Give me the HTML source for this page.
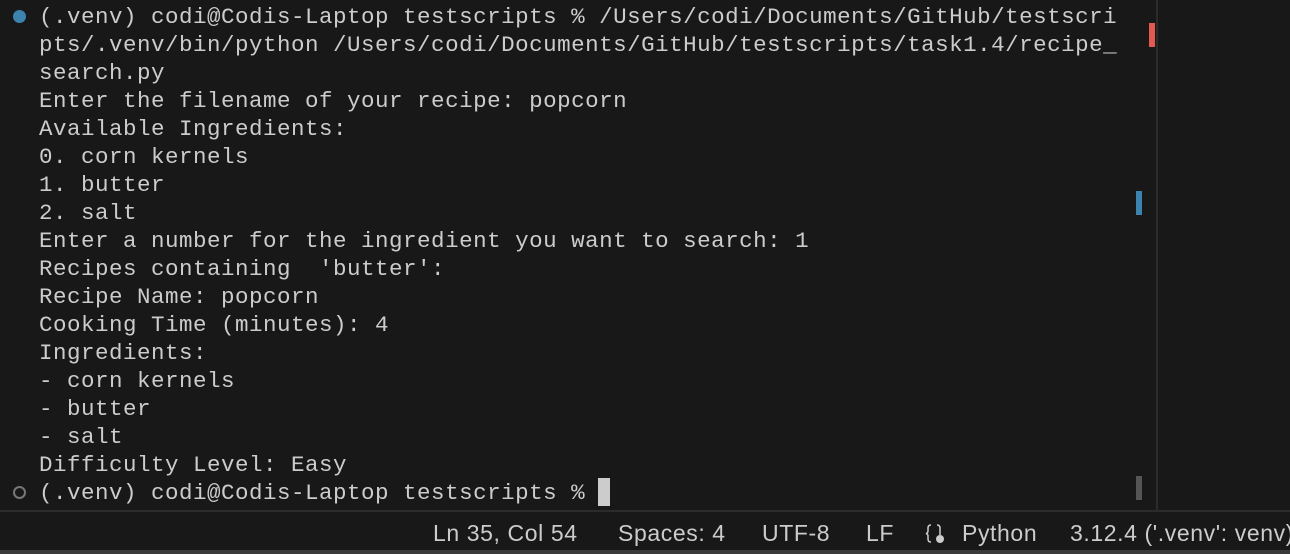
<!DOCTYPE html>
<html><head><style>
html,body{margin:0;padding:0;background:#181818;}
body{width:1290px;height:554px;position:relative;overflow:hidden;}
.term{position:absolute;left:39px;top:3px;font-family:"Liberation Mono",monospace;font-size:22.5px;letter-spacing:0.5px;line-height:28px;color:#cccccc;white-space:pre;}
.dot{position:absolute;left:13px;width:13px;height:13px;border-radius:50%;}
.vline{position:absolute;left:1156px;top:0;width:2px;height:510px;background:#2b2b2b;}
.status{position:absolute;left:0;top:510px;width:1290px;height:40px;border-top:2px solid #2b2b2b;background:#181818;font-family:"Liberation Sans",sans-serif;font-size:23px;letter-spacing:0.6px;color:#cccccc;}
.status span{position:absolute;top:8px;white-space:nowrap;}
.bottom{position:absolute;left:0;top:550px;width:1290px;height:4px;background:#3a3a3a;}
</style></head><body>
<div class="dot" style="top:10px;background:#3c84ad;"></div>
<div class="dot" style="top:486px;border:2px solid #777;width:9px;height:9px;"></div>
<div class="term">(.venv) codi@Codis-Laptop testscripts % /Users/codi/Documents/GitHub/testscri
pts/.venv/bin/python /Users/codi/Documents/GitHub/testscripts/task1.4/recipe_
search.py
Enter the filename of your recipe: popcorn
Available Ingredients:
0. corn kernels
1. butter
2. salt
Enter a number for the ingredient you want to search: 1
Recipes containing  'butter':
Recipe Name: popcorn
Cooking Time (minutes): 4
Ingredients:
- corn kernels
- butter
- salt
Difficulty Level: Easy
(.venv) codi@Codis-Laptop testscripts % </div>
<div style="position:absolute;left:598px;top:478px;width:12px;height:28px;background:#cccccc;"></div>
<div style="position:absolute;left:1149px;top:23px;width:6px;height:24px;background:#e05a51;"></div>
<div style="position:absolute;left:1136px;top:191px;width:6px;height:24px;background:#3c84ad;"></div>
<div style="position:absolute;left:1136px;top:476px;width:6px;height:24px;background:#555;"></div>
<div class="vline"></div>
<div class="status">
<span style="left:433px;">Ln 35, Col 54</span>
<span style="left:618px;">Spaces: 4</span>
<span style="left:762px;">UTF-8</span>
<span style="left:866px;">LF</span>
<svg style="position:absolute;left:924px;top:11px;" width="24" height="22" viewBox="0 0 24 22"><path d="M7 2 Q4 2 4 5 L4 8 Q4 10 2 10.5 Q4 11 4 13 L4 16 Q4 19 7 19" stroke="#ccc" stroke-width="1.5" fill="none"/><path d="M13 2 Q16 2 16 5 L16 12" stroke="#ccc" stroke-width="1.5" fill="none"/><circle cx="16" cy="16" r="4" fill="#ccc"/></svg>
<span style="left:962px;">Python</span>
<span style="left:1070px;">3.12.4 ('.venv': venv)</span>
</div>
<div class="bottom"></div>
</body></html>
